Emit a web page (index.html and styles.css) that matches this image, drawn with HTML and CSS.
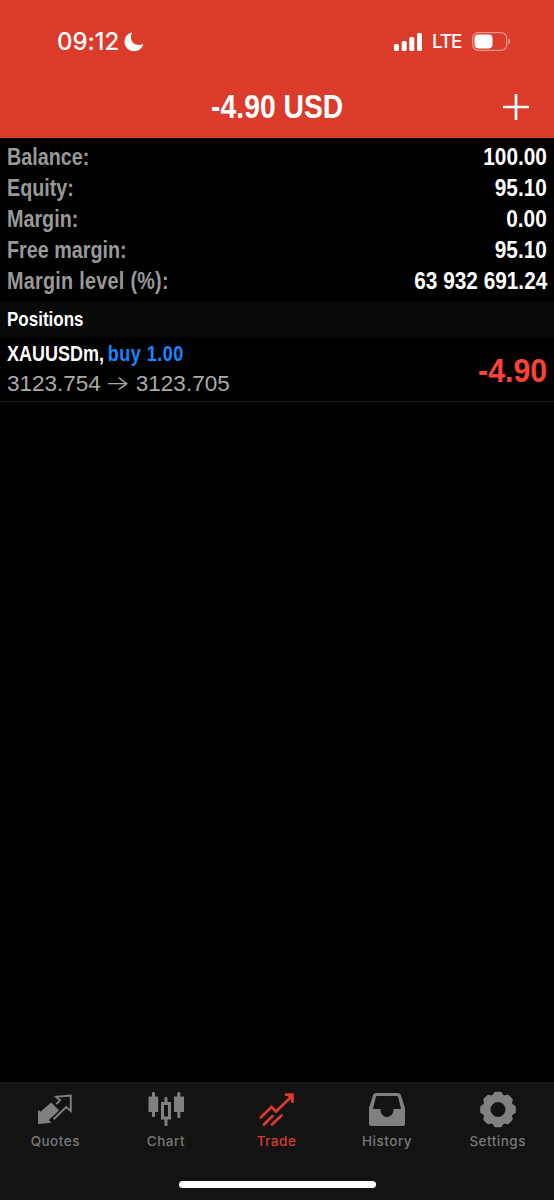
FILE: index.html
```html
<!DOCTYPE html>
<html lang="en">
<head>
    <meta charset="UTF-8">
    <meta name="viewport" content="width=device-width, initial-scale=1.0">
    <title>Trade</title>
    <link rel="stylesheet" href="styles.css">
</head>
<body>
    <div class="app">
        <header class="header">
            <div class="status">
                <div class="status-left">
                    <span class="time">09:12</span>
                    <svg class="moon" width="20" height="20" viewBox="0 0 20 20"><path fill="#fff" d="M7.700.5C3.500 1.600.500 5.300.500 9.800c0 5.300 4.300 9.400 9.500 9.400 4.200 0 7.800-2.600 9.200-6.200.2-.6-.2-.9-.7-.7-1.100.4-2.300.6-3.500.6-4.800 0-8.100-3.300-8.100-8 0-1.200.3-2.400.9-3.500.3-.5.300-1-.1-.9z"/></svg>
                </div>
                <div class="status-right">
                    <svg width="28" height="18" viewBox="0 0 28 18" fill="#fff">
                        <rect x="0" y="11" width="5" height="7" rx="1.600"/>
                        <rect x="7.700" y="8" width="5" height="10" rx="1.600"/>
                        <rect x="15.300" y="4" width="5" height="14" rx="1.600"/>
                        <rect x="23" y="0" width="5" height="18" rx="1.600"/>
                    </svg>
                    <span class="network">LTE</span>
                    <svg width="39" height="19" viewBox="0 0 39 19">
                        <rect x=".7" y=".7" width="34" height="17.600" rx="5.500" fill="none" stroke="#fff" stroke-opacity=".45" stroke-width="1.300"/>
                        <rect x="2.500" y="2.600" width="18" height="13.800" rx="3.800" fill="#fff"/>
                        <path d="M36.300 6.500c2.300 1 2.300 5 0 6z" fill="#fff" fill-opacity=".5"/>
                    </svg>
                </div>
            </div>
            <div class="title-bar">
                <h1 class="title">-4.90 USD</h1>
                <svg class="plus" width="26" height="26" viewBox="0 0 26 26"><path d="M13 0v26M0 13h26" stroke="#fff" stroke-width="2.700"/></svg>
            </div>
        </header>

        <main class="content">
            <div class="account">
                <div class="row"><span class="label">Balance:</span><span class="value">100.00</span></div>
                <div class="row"><span class="label">Equity:</span><span class="value">95.10</span></div>
                <div class="row"><span class="label">Margin:</span><span class="value">0.00</span></div>
                <div class="row"><span class="label">Free margin:</span><span class="value">95.10</span></div>
                <div class="row"><span class="label level">Margin level (%):</span><span class="value">63 932 691.24</span></div>
            </div>
            <h2 class="section"><span>Positions</span></h2>
            <div class="position">
                <div class="position-info">
                    <div class="symbol">XAUUSDm, <span class="buy">buy 1.00</span></div>
                    <div class="prices">3123.754 <span class="arrow">→</span> 3123.705</div>
                </div>
                <span class="profit">-4.90</span>
            </div>
        </main>

        <nav class="tabs">
            <div class="tab-list">
                <div class="tab">
                    <svg width="36" height="36" viewBox="0 0 36 36">
                        <path fill="#808080" d="M1 20l2.500 1.700L13.500 13q.7-.5 1.300 0l6.700 6.700q.6.800 0 1.400L11.800 30l2.600 2.700L1 34z"/>
                        <path fill="none" stroke="#808080" stroke-width="1.900" d="M16.600 29.300 29.200 17l4.600 4V5.500L19 6.700l4 3.600-3.700 3.900"/>
                    </svg>
                    <span>Quotes</span>
                </div>
                <div class="tab">
                    <svg width="36" height="36" viewBox="0 0 36 36" fill="#808080">
                        <path d="M4 2.500q1.500-1.200 3 0v4h3.200V22H7v4.500q-1.500 1-3 0V22H.5V6.500H4zM29.300 2.500q1.500-1.200 3 0v4H36V22h-3.700v5.500q-1.500 1-3 0V22H26V6.500h3.300z"/>
                        <path fill-rule="evenodd" d="M16.500 7.500q1.500-1.200 3 0V12H23v17.500h-3.500v6q-1.500 1-3 0v-6H13V12h3.500zM16 15v11.500h4V15z"/>
                    </svg>
                    <span>Chart</span>
                </div>
                <div class="tab active">
                    <svg width="36" height="36" viewBox="-1 0 36 36" fill="none" stroke="#da3b2d" stroke-width="2.700" stroke-linecap="round">
                        <path d="M1.800 27.500 12.500 17l4.500 4.500L33 6M27 4.700h6.500v7M5 34.500l8.500-8.500M13 34.500l9.500-9"/>
                        <path d="M27 4.500h7V12z" fill="#da3b2d" stroke="none"/>
                    </svg>
                    <span>Trade</span>
                </div>
                <div class="tab">
                    <svg width="36" height="36" viewBox="0 0 36 36" fill="#808080">
                        <path fill-rule="evenodd" d="M7.500 3h21c2.200 0 3 .8 3.600 2.700L36 18v15.500q0 2.500-2.500 2.500h-31Q0 36 0 33.500V18L3.900 5.700C4.500 3.800 5.300 3 7.500 3zM8.500 6c-1 0-1.400.4-1.700 1.300L3.900 19h7.500c0 10.500 13.200 10.500 13.200 0h7.500L29.200 7.300c-.3-.9-.7-1.300-1.700-1.300z"/>
                    </svg>
                    <span>History</span>
                </div>
                <div class="tab">
                    <svg class="gear" width="36" height="36" viewBox="-18 -19.500 36 36">
                        <circle r="11.400" fill="none" stroke="#808080" stroke-width="7.800"/>
                        <g fill="#808080">
                            <path id="tooth" d="M-6-13.500-3.800-17q.4-.8 1.300-.8h5q.9 0 1.300.8L6-13.500z"/>
                            <use href="#tooth" transform="rotate(45)"/>
                            <use href="#tooth" transform="rotate(90)"/>
                            <use href="#tooth" transform="rotate(135)"/>
                            <use href="#tooth" transform="rotate(180)"/>
                            <use href="#tooth" transform="rotate(225)"/>
                            <use href="#tooth" transform="rotate(270)"/>
                            <use href="#tooth" transform="rotate(315)"/>
                        </g>
                    </svg>
                    <span>Settings</span>
                </div>
            </div>
            <div class="home"></div>
        </nav>
    </div>
</body>
</html>
```
FILE: styles.css
```css
* {
    box-sizing: border-box;
}

body {
    margin: 0;
    background: #000;
    color: #fff;
    font-family: "Liberation Sans", Arial, sans-serif;
}

.app {
    display: flex;
    flex-direction: column;
    height: 1200px;
}

/* Header */
.header {
    height: 138px;
    background: #da3b2b;
}

.status {
    display: flex;
    justify-content: space-between;
    align-items: center;
    height: 83px;
    padding: 0 43px 0 57px;
    font-family: Inter, sans-serif;
}

.status-left,
.status-right {
    display: flex;
    align-items: center;
}

.status-left {
    gap: 5px;
}

.status-right {
    gap: 10px;
}

.time {
    font-size: 24px;
    font-weight: 500;
    letter-spacing: -0.1px;
}

.network {
    width: 30px;
    font-size: 19px;
    font-weight: 500;
    letter-spacing: -1.2px;
}

.title-bar {
    display: grid;
    grid-template-columns: 1fr auto 1fr;
    align-items: center;
    height: 48px;
    padding-right: 25px;
    padding-left: 25px;
}

.title {
    grid-column: 2;
    margin: 0;
    font-size: 33.5px;
    line-height: 48px;
    transform: scaleX(0.845);
}

.plus {
    justify-self: end;
}

/* Account summary */
.content {
    flex: 1;
}

.account {
    height: 163px;
    padding: 4px 7px 0;
}

.row {
    display: flex;
    justify-content: space-between;
    height: 31px;
    font-size: 23.5px;
    font-weight: bold;
    line-height: 31px;
}

.label {
    color: #999;
    transform: scaleX(0.84);
    transform-origin: left;
}

.level {
    letter-spacing: 0.35px;
}

.value {
    transform: scaleX(0.885);
    transform-origin: right;
}

/* Positions */
.section {
    height: 36px;
    margin: 0;
    padding: 0 7px;
    background: #080808;
    font-size: 21px;
    line-height: 36px;
}

.section span {
    display: inline-block;
    transform: scaleX(0.81);
    transform-origin: left;
}

.position {
    display: flex;
    justify-content: space-between;
    height: 65px;
    padding: 0 7px;
    border-bottom: 1px solid #1c1c1c;
}

.symbol {
    height: 32px;
    font-size: 22.5px;
    font-weight: bold;
    line-height: 33px;
    white-space: nowrap;
    word-spacing: -1.5px;
    transform: scaleX(0.8);
    transform-origin: left;
}

.buy {
    color: #1a85ff;
    letter-spacing: 0.6px;
    word-spacing: 0;
}

.prices {
    color: #aaa;
    font-size: 22.5px;
    line-height: 29px;
}

.arrow {
    display: inline-block;
    margin: 0 1px 0 0;
    font-family: Inter, sans-serif;
    font-weight: 300;
    line-height: 20px;
    transform: scale(1.2, 0.9);
}

.profit {
    color: #fb4336;
    font-size: 33px;
    font-weight: bold;
    line-height: 67px;
    transform: scaleX(0.92);
    transform-origin: right;
}

/* Bottom tabs */
.tabs {
    height: 118px;
    background: #131313;
    border-top: 1px solid #1b1b1b;
}

.tab-list {
    display: grid;
    grid-template-columns: repeat(5, 1fr);
    height: 98px;
    padding: 7px 1px 0 0;
}

.tab {
    display: flex;
    flex-direction: column;
    align-items: center;
    color: #787878;
    font-family: Inter, sans-serif;
    font-size: 13.5px;
    font-weight: 500;
    line-height: 18px;
    letter-spacing: 0.5px;
}

.tab span {
    margin-top: 6px;
}

.gear {
    overflow: visible;
}

.active {
    color: #da3b2d;
}

.home {
    width: 197px;
    height: 7px;
    margin: 0 auto;
    border-radius: 4px;
    background: #fff;
}
```
